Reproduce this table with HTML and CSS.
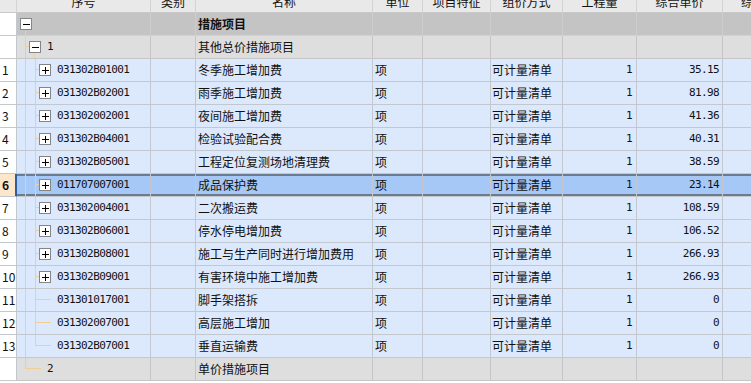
FILE: index.html
```html
<!DOCTYPE html>
<html lang="zh-CN">
<head>
<meta charset="utf-8">
<title>措施项目</title>
<link rel="stylesheet" href="styles.css">
</head>
<body>
<div class="sheet">
  <div class="row head">
    <div class="c"></div>
    <div class="c"><span>序号</span></div>
    <div class="c"><span>类别</span></div>
    <div class="c"><span>名称</span></div>
    <div class="c"><span>单位</span></div>
    <div class="c"><span>项目特征</span></div>
    <div class="c"><span>组价方式</span></div>
    <div class="c"><span>工程量</span></div>
    <div class="c"><span>综合单价</span></div>
    <div class="c"><span>综合合价</span></div>
  </div>

  <div class="row grp0">
    <div class="c idx"></div>
    <div class="c tree">
      <span class="node"><i class="sp"></i><svg class="box" width="12" height="12" viewBox="0 0 12 12"><rect x="0.5" y="0.5" width="11" height="11" fill="#fff" stroke="#858585"/><path d="M3 6.5H10" stroke="#000"/></svg><i class="stub"></i></span>
    </div>
    <div class="c"></div>
    <div class="c name"><b>措施项目</b></div>
    <div class="c"></div><div class="c"></div><div class="c"></div><div class="c"></div><div class="c"></div><div class="c"></div>
  </div>

  <div class="row grp1">
    <div class="c idx"></div>
    <div class="c tree">
      <span class="g tee w4"><i class="gt"></i><i class="gb"></i></span>
      <span class="node"><i class="sp"></i><svg class="box" width="12" height="12" viewBox="0 0 12 12"><rect x="0.5" y="0.5" width="11" height="11" fill="#fff" stroke="#858585"/><path d="M3 6.5H10" stroke="#000"/></svg><i class="stub"></i></span>
      <span class="n txt">1</span>
    </div>
    <div class="c"></div>
    <div class="c name">其他总价措施项目</div>
    <div class="c"></div><div class="c"></div><div class="c"></div><div class="c"></div><div class="c"></div><div class="c"></div>
  </div>

  <div class="row item">
    <div class="c idx">1</div>
    <div class="c tree">
      <span class="g pass"><i class="gt"></i><i class="gb"></i></span>
      <span class="g tee w4"><i class="gt"></i><i class="gb"></i></span>
      <svg class="box" width="12" height="12" viewBox="0 0 12 12"><rect x="0.5" y="0.5" width="11" height="11" fill="#fff" stroke="#858585"/><path d="M3 6.5H10M6.5 3V10" stroke="#000"/></svg>
      <span class="n txt">031302B01001</span>
    </div>
    <div class="c"></div>
    <div class="c name">冬季施工增加费</div>
    <div class="c unit">项</div>
    <div class="c"></div>
    <div class="c way">可计量清单</div>
    <div class="c num"><span class="n">1</span></div>
    <div class="c price"><span class="n">35.15</span></div>
    <div class="c"></div>
  </div>

  <div class="row item">
    <div class="c idx">2</div>
    <div class="c tree">
      <span class="g pass"><i class="gt"></i><i class="gb"></i></span>
      <span class="g tee w4"><i class="gt"></i><i class="gb"></i></span>
      <svg class="box" width="12" height="12" viewBox="0 0 12 12"><rect x="0.5" y="0.5" width="11" height="11" fill="#fff" stroke="#858585"/><path d="M3 6.5H10M6.5 3V10" stroke="#000"/></svg>
      <span class="n txt">031302B02001</span>
    </div>
    <div class="c"></div>
    <div class="c name">雨季施工增加费</div>
    <div class="c unit">项</div>
    <div class="c"></div>
    <div class="c way">可计量清单</div>
    <div class="c num"><span class="n">1</span></div>
    <div class="c price"><span class="n">81.98</span></div>
    <div class="c"></div>
  </div>

  <div class="row item">
    <div class="c idx">3</div>
    <div class="c tree">
      <span class="g pass"><i class="gt"></i><i class="gb"></i></span>
      <span class="g tee w4"><i class="gt"></i><i class="gb"></i></span>
      <svg class="box" width="12" height="12" viewBox="0 0 12 12"><rect x="0.5" y="0.5" width="11" height="11" fill="#fff" stroke="#858585"/><path d="M3 6.5H10M6.5 3V10" stroke="#000"/></svg>
      <span class="n txt">031302002001</span>
    </div>
    <div class="c"></div>
    <div class="c name">夜间施工增加费</div>
    <div class="c unit">项</div>
    <div class="c"></div>
    <div class="c way">可计量清单</div>
    <div class="c num"><span class="n">1</span></div>
    <div class="c price"><span class="n">41.36</span></div>
    <div class="c"></div>
  </div>

  <div class="row item">
    <div class="c idx">4</div>
    <div class="c tree">
      <span class="g pass"><i class="gt"></i><i class="gb"></i></span>
      <span class="g tee w4"><i class="gt"></i><i class="gb"></i></span>
      <svg class="box" width="12" height="12" viewBox="0 0 12 12"><rect x="0.5" y="0.5" width="11" height="11" fill="#fff" stroke="#858585"/><path d="M3 6.5H10M6.5 3V10" stroke="#000"/></svg>
      <span class="n txt">031302B04001</span>
    </div>
    <div class="c"></div>
    <div class="c name">检验试验配合费</div>
    <div class="c unit">项</div>
    <div class="c"></div>
    <div class="c way">可计量清单</div>
    <div class="c num"><span class="n">1</span></div>
    <div class="c price"><span class="n">40.31</span></div>
    <div class="c"></div>
  </div>

  <div class="row item">
    <div class="c idx">5</div>
    <div class="c tree">
      <span class="g pass"><i class="gt"></i><i class="gb"></i></span>
      <span class="g tee w4"><i class="gt"></i><i class="gb"></i></span>
      <svg class="box" width="12" height="12" viewBox="0 0 12 12"><rect x="0.5" y="0.5" width="11" height="11" fill="#fff" stroke="#858585"/><path d="M3 6.5H10M6.5 3V10" stroke="#000"/></svg>
      <span class="n txt">031302B05001</span>
    </div>
    <div class="c"></div>
    <div class="c name">工程定位复测场地清理费</div>
    <div class="c unit">项</div>
    <div class="c"></div>
    <div class="c way">可计量清单</div>
    <div class="c num"><span class="n">1</span></div>
    <div class="c price"><span class="n">38.59</span></div>
    <div class="c"></div>
  </div>

  <div class="row item selected">
    <div class="c idx">6</div>
    <div class="c tree">
      <span class="g pass"><i class="gt"></i><i class="gb"></i></span>
      <span class="g tee w4"><i class="gt"></i><i class="gb"></i></span>
      <svg class="box" width="12" height="12" viewBox="0 0 12 12"><rect x="0.5" y="0.5" width="11" height="11" fill="#fff" stroke="#858585"/><path d="M3 6.5H10M6.5 3V10" stroke="#000"/></svg>
      <span class="n txt">011707007001</span>
    </div>
    <div class="c"></div>
    <div class="c name">成品保护费</div>
    <div class="c unit">项</div>
    <div class="c"></div>
    <div class="c way">可计量清单</div>
    <div class="c num"><span class="n">1</span></div>
    <div class="c price"><span class="n">23.14</span></div>
    <div class="c"></div>
  </div>

  <div class="row item">
    <div class="c idx">7</div>
    <div class="c tree">
      <span class="g pass"><i class="gt"></i><i class="gb"></i></span>
      <span class="g tee w4"><i class="gt"></i><i class="gb"></i></span>
      <svg class="box" width="12" height="12" viewBox="0 0 12 12"><rect x="0.5" y="0.5" width="11" height="11" fill="#fff" stroke="#858585"/><path d="M3 6.5H10M6.5 3V10" stroke="#000"/></svg>
      <span class="n txt">031302004001</span>
    </div>
    <div class="c"></div>
    <div class="c name">二次搬运费</div>
    <div class="c unit">项</div>
    <div class="c"></div>
    <div class="c way">可计量清单</div>
    <div class="c num"><span class="n">1</span></div>
    <div class="c price"><span class="n">108.59</span></div>
    <div class="c"></div>
  </div>

  <div class="row item">
    <div class="c idx">8</div>
    <div class="c tree">
      <span class="g pass"><i class="gt"></i><i class="gb"></i></span>
      <span class="g tee w4"><i class="gt"></i><i class="gb"></i></span>
      <svg class="box" width="12" height="12" viewBox="0 0 12 12"><rect x="0.5" y="0.5" width="11" height="11" fill="#fff" stroke="#858585"/><path d="M3 6.5H10M6.5 3V10" stroke="#000"/></svg>
      <span class="n txt">031302B06001</span>
    </div>
    <div class="c"></div>
    <div class="c name">停水停电增加费</div>
    <div class="c unit">项</div>
    <div class="c"></div>
    <div class="c way">可计量清单</div>
    <div class="c num"><span class="n">1</span></div>
    <div class="c price"><span class="n">106.52</span></div>
    <div class="c"></div>
  </div>

  <div class="row item">
    <div class="c idx">9</div>
    <div class="c tree">
      <span class="g pass"><i class="gt"></i><i class="gb"></i></span>
      <span class="g tee w4"><i class="gt"></i><i class="gb"></i></span>
      <svg class="box" width="12" height="12" viewBox="0 0 12 12"><rect x="0.5" y="0.5" width="11" height="11" fill="#fff" stroke="#858585"/><path d="M3 6.5H10M6.5 3V10" stroke="#000"/></svg>
      <span class="n txt">031302B08001</span>
    </div>
    <div class="c"></div>
    <div class="c name">施工与生产同时进行增加费用</div>
    <div class="c unit">项</div>
    <div class="c"></div>
    <div class="c way">可计量清单</div>
    <div class="c num"><span class="n">1</span></div>
    <div class="c price"><span class="n">266.93</span></div>
    <div class="c"></div>
  </div>

  <div class="row item">
    <div class="c idx">10</div>
    <div class="c tree">
      <span class="g pass"><i class="gt"></i><i class="gb"></i></span>
      <span class="g tee w4"><i class="gt"></i><i class="gb"></i></span>
      <svg class="box" width="12" height="12" viewBox="0 0 12 12"><rect x="0.5" y="0.5" width="11" height="11" fill="#fff" stroke="#858585"/><path d="M3 6.5H10M6.5 3V10" stroke="#000"/></svg>
      <span class="n txt">031302B09001</span>
    </div>
    <div class="c"></div>
    <div class="c name">有害环境中施工增加费</div>
    <div class="c unit">项</div>
    <div class="c"></div>
    <div class="c way">可计量清单</div>
    <div class="c num"><span class="n">1</span></div>
    <div class="c price"><span class="n">266.93</span></div>
    <div class="c"></div>
  </div>

  <div class="row item">
    <div class="c idx">11</div>
    <div class="c tree">
      <span class="g pass"><i class="gt"></i><i class="gb"></i></span>
      <span class="g tee w16"><i class="gt"></i><i class="gb"></i></span>
      <span class="n txt">031301017001</span>
    </div>
    <div class="c"></div>
    <div class="c name">脚手架搭拆</div>
    <div class="c unit">项</div>
    <div class="c"></div>
    <div class="c way">可计量清单</div>
    <div class="c num"><span class="n">1</span></div>
    <div class="c price"><span class="n">0</span></div>
    <div class="c"></div>
  </div>

  <div class="row item">
    <div class="c idx">12</div>
    <div class="c tree">
      <span class="g pass"><i class="gt"></i><i class="gb"></i></span>
      <span class="g tee w16"><i class="gt"></i><i class="gb"></i></span>
      <span class="n txt">031302007001</span>
    </div>
    <div class="c"></div>
    <div class="c name">高层施工增加</div>
    <div class="c unit">项</div>
    <div class="c"></div>
    <div class="c way">可计量清单</div>
    <div class="c num"><span class="n">1</span></div>
    <div class="c price"><span class="n">0</span></div>
    <div class="c"></div>
  </div>

  <div class="row item">
    <div class="c idx">13</div>
    <div class="c tree">
      <span class="g pass"><i class="gt"></i><i class="gb"></i></span>
      <span class="g corner w16"><i class="gt"></i><i class="gb"></i></span>
      <span class="n txt">031302B07001</span>
    </div>
    <div class="c"></div>
    <div class="c name">垂直运输费</div>
    <div class="c unit">项</div>
    <div class="c"></div>
    <div class="c way">可计量清单</div>
    <div class="c num"><span class="n">1</span></div>
    <div class="c price"><span class="n">0</span></div>
    <div class="c"></div>
  </div>

  <div class="row grp1">
    <div class="c idx"></div>
    <div class="c tree">
      <span class="g corner w16"><i class="gt"></i><i class="gb"></i></span>
      <span class="n txt">2</span>
    </div>
    <div class="c"></div>
    <div class="c name">单价措施项目</div>
    <div class="c"></div><div class="c"></div><div class="c"></div><div class="c"></div><div class="c"></div><div class="c"></div>
  </div>
</div>
</body>
</html>
```

FILE: styles.css
```css
* { box-sizing: border-box; }

html, body {
  margin: 0;
  padding: 0;
  background: #ffffff;
}

body {
  width: 751px;
  height: 383px;
  overflow: hidden;
  font-family: "Noto Sans CJK SC", "Noto Sans", sans-serif;
  font-size: 12px;
  color: #111111;
}

.sheet {
  --ln: #f2cd96;
  width: 808px;
}

.row {
  display: grid;
  grid-template-columns: 17px 134px 45px 177px 50px 68px 72px 74px 86px 85px;
  height: 23px;
}

.c {
  display: flex;
  align-items: center;
  border-right: 1px solid #c3c7ce;
  border-bottom: 1px solid #c3c7ce;
  white-space: nowrap;
  overflow: hidden;
  line-height: 16px;
}

/* header (top part scrolled out of view) */
.row.head { height: 13px; }
.head .c {
  background: #e9e9e9;
  border-right-color: #d3d3d3;
  border-bottom-color: #c9c9c9;
  justify-content: center;
  align-items: flex-end;
}
.head .c span { line-height: 20px; flex: none; }

/* group rows */
.grp0 .c {
  background: #c4c4c4;
  border-right-color: #cdcdcd;
  border-bottom-color: #d2d2d2;
}
.grp1 .c {
  background: #dedede;
  border-right-color: #c6c6c6;
  border-bottom-color: #c6c6c6;
}

/* item rows */
.item .c { background: #dce8fb; }

.c.idx {
  background: #ffffff;
  padding-left: 2px;
}
.grp0 .c.idx, .grp1 .c.idx {
  background: #ffffff;
  border-bottom-color: #c8c8c8;
  border-right-color: #c3c7ce;
}

.name { padding-left: 2px; }
.unit { padding-left: 2px; }
.way { padding-left: 1px; }
.num, .price { justify-content: flex-end; }
.num { padding-right: 4px; }
.price { padding-right: 3px; }

.n {
  font-family: "DejaVu Sans Mono", monospace;
  font-size: 11px;
  letter-spacing: -0.6px;
}

/* tree column */
.c.tree {
  align-items: stretch;
  padding-left: 8px;
}
.grp0 .c.tree { padding-left: 3px; }

.tree .box { flex: none; display: block; align-self: center; }
.tree .txt { align-self: center; margin-left: 6px; }

/* expandable node: box with a stub line down to its children */
.node {
  display: flex;
  flex-direction: column;
  flex: none;
  width: 12px;
}
.node .sp { flex: 1; }
.node .stub {
  flex: 1;
  margin-left: 5px;
  margin-top: 1px;
  border-left: 1px solid var(--ln);
}

/* guide lines */
.g {
  display: flex;
  flex-direction: column;
  flex: none;
  width: 10px;
}
.g .gt { height: 11px; flex: none; }
.g .gb { flex: 1; }
.g.w4 { width: 4px; }
.g.w16 { width: 16px; }

.g.pass .gt,
.g.pass .gb { border-left: 1px solid var(--ln); }

.g.tee .gt { border-left: 1px solid var(--ln); border-bottom: 1px solid var(--ln); }
.g.tee .gb { border-left: 1px solid var(--ln); }

.g.corner .gt { border-left: 1px solid var(--ln); border-bottom: 1px solid var(--ln); }

/* selected row */
.item.selected .c {
  background-color: #a6c8f6;
  box-shadow: inset 0 2px #6d7b8f, inset 0 -2px #6d7b8f;
}
.item.selected .c.idx {
  background: #fde7cb;
  box-shadow: inset -1px 0 #2c5ea6;
  border-right-color: #2c5ea6;
  font-weight: bold;
}
```
